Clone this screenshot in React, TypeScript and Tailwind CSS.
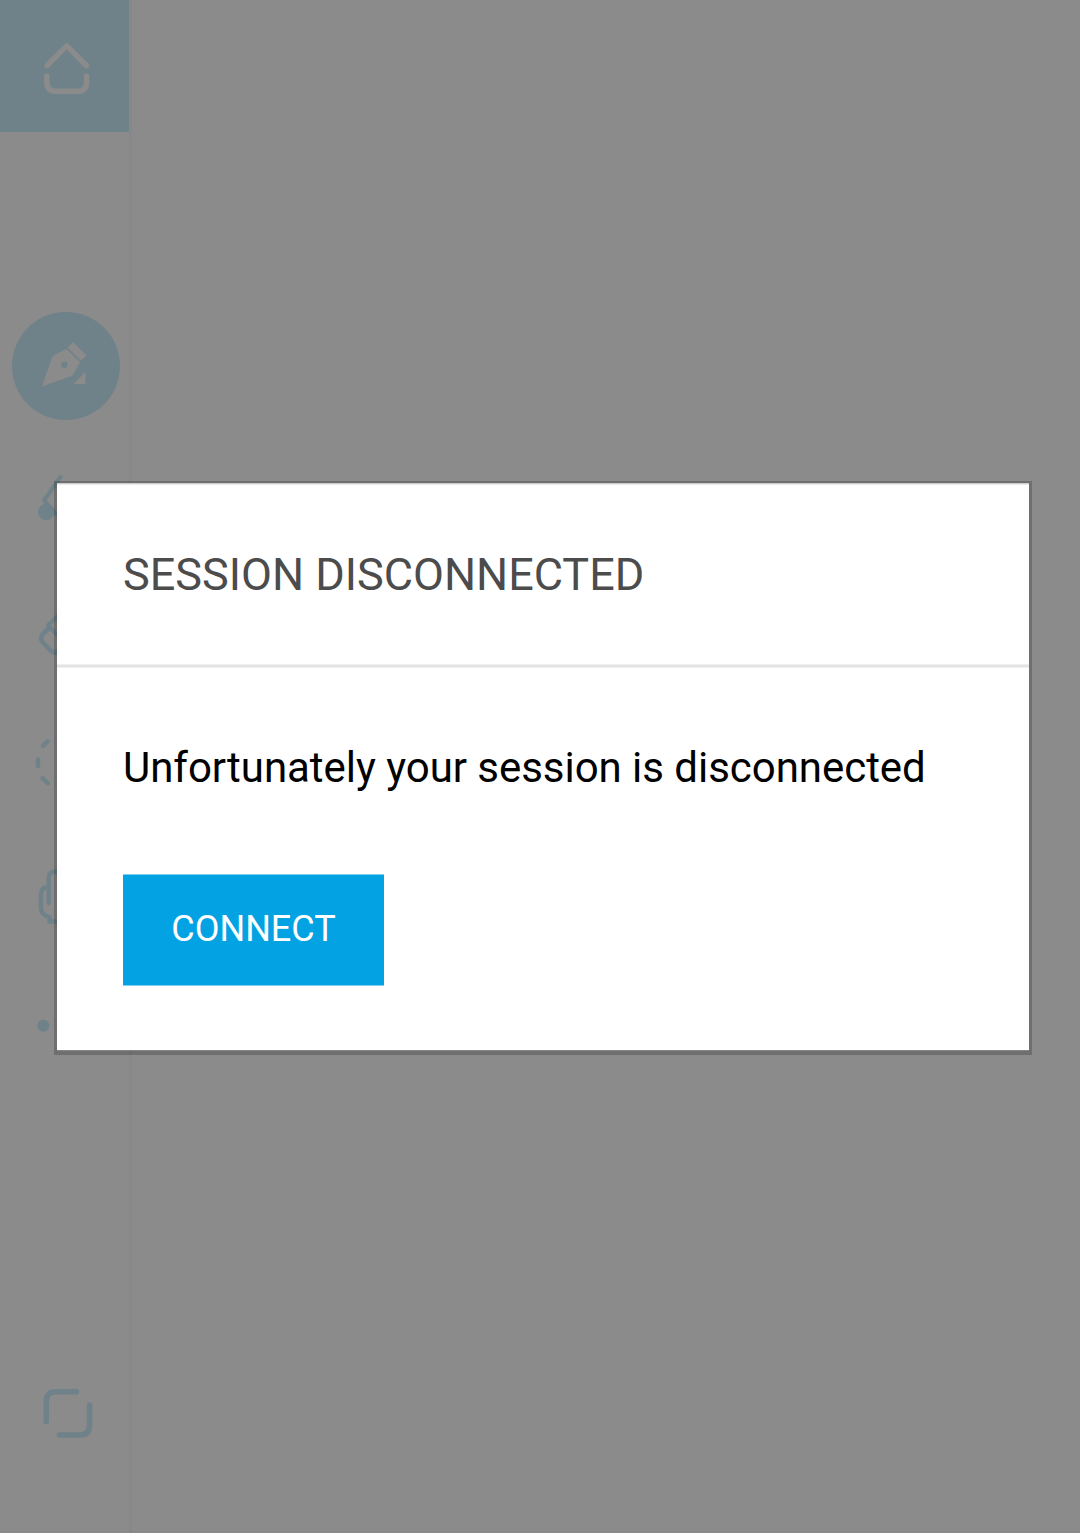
import type { ReactNode } from "react";

const TEAL = "#6f8289";
const GRAY = "#8b8b8b";

function Tool({ label, children }: { label: string; children: ReactNode }) {
  return (
    <button aria-label={label} className="block h-[132px] w-[132px] shrink-0">
      <svg width="132" height="132" viewBox="0 0 132 132" fill="none" strokeLinecap="round" strokeLinejoin="round">
        {children}
      </svg>
    </button>
  );
}

function Sidebar() {
  return (
    <nav className="flex h-full w-[132px] shrink-0 flex-col border-r-[3px] border-[#888888]">
      <div className="w-[129px] shrink-0 overflow-hidden bg-[#6f8289]">
        <Tool label="Home">
          <path d="M47 65.5L66.7 45.8L86.4 65.5" stroke={GRAY} strokeWidth="5.4" />
          <path d="M46.8 76V82Q46.8 91.3 56 91.3H77.5Q86.6 91.3 86.6 82V76" stroke={GRAY} strokeWidth="5.4" />
        </Tool>
      </div>
      <div className="mt-[168px] flex flex-col">
        <Tool label="Pen">
          <circle cx="66" cy="66" r="54" fill={TEAL} />
          <path d="M42 86.5L51.7 58.5Q53 55.5 56 54L66.3 49L80 62L74.5 72.5Q73.3 75 70.5 76.2Z" fill={GRAY} />
          <path d="M73 42L86.5 55.5L81 60.8L67.7 47.8Z" fill={GRAY} />
          <path d="M85.5 72V84H73.5Z" fill={GRAY} />
          <circle cx="64.3" cy="64.8" r="3.2" fill={TEAL} />
        </Tool>
        <Tool label="Highlighter">
          <path d="M60.5 45L44 68.5L57 82.5" stroke={TEAL} strokeWidth="4" />
          <circle cx="46.2" cy="80" r="8.2" fill={TEAL} />
          <path d="M48 73L57 82L54 84H46Z" fill={TEAL} />
        </Tool>
        <Tool label="Eraser">
          <path d="M48.5 64.5L43 70Q39.2 74 43 78.5L50.5 86.5Q54 89.5 58 88" stroke={TEAL} strokeWidth="4.6" />
          <path d="M62 47.5L48 61.5L64 77.5" stroke={TEAL} strokeWidth="4.4" />
        </Tool>
        <Tool label="Lasso">
          <path d="M43 50L47.5 45.5M38 63.5V70M42.7 82.2L47.8 87.3M62 40H68M62 93H68" stroke={TEAL} strokeWidth="4.4" />
        </Tool>
        <Tool label="Pan">
          <path d="M48.7 75V50Q48.7 43.7 54.5 43.7Q60 43.7 60 51V68M48 59Q41 59 41 67V80Q41 87 49.5 89V93.5H76V84" stroke={TEAL} strokeWidth="4.4" />
        </Tool>
        <Tool label="More">
          <circle cx="43.4" cy="65.8" r="6" fill={TEAL} />
        </Tool>
      </div>
      <div className="mt-[255px]">
        <Tool label="Fit to screen">
          <path d="M46.3 74.5V54.5Q46.3 44.7 56 44.7H76.5" stroke={TEAL} strokeWidth="5.5" />
          <path d="M59.5 88H80Q89.6 88 89.6 78V58" stroke={TEAL} strokeWidth="5.5" />
        </Tool>
      </div>
    </nav>
  );
}

function SessionDialog() {
  return (
    <section
      role="dialog"
      aria-labelledby="session-title"
      className="absolute top-[481px] left-[54px] w-[978px] border-x-[3px] border-t-2 border-b-4 border-black/20 bg-white bg-clip-padding font-['Roboto',sans-serif]"
    >
      <div className="h-px bg-[#cccccc]" />
      <div className="h-px bg-[#ececec]" />
      <div className="flex h-[179px] items-center px-[66px]">
        <h1 id="session-title" className="text-[45px] leading-[54px] whitespace-nowrap text-[#4c4c4c]">
          SESSION DISCONNECTED
        </h1>
      </div>
      <div className="h-1 border-y border-[#f0f0f0] bg-[#e3e3e3]" />
      <div className="flex h-[382px] flex-col items-start px-[66px] pt-[75px]">
        <p className="text-[42px] leading-[50px] tracking-[-0.036px] whitespace-nowrap text-black">
          Unfortunately your session is disconnected
        </p>
        <button className="mt-[81px] flex h-[112px] w-[261px] items-center justify-center border-y border-[#81d0f1] bg-[#03a2e3] pb-[3px] text-[36px] leading-[42px] text-white">
          CONNECT
        </button>
      </div>
      <div className="h-px bg-[#858585]" />
    </section>
  );
}

export default function App() {
  return (
    <main className="relative flex h-[1533px] w-[1080px] overflow-hidden bg-[#8b8b8b]">
      <Sidebar />
      <SessionDialog />
    </main>
  );
}
